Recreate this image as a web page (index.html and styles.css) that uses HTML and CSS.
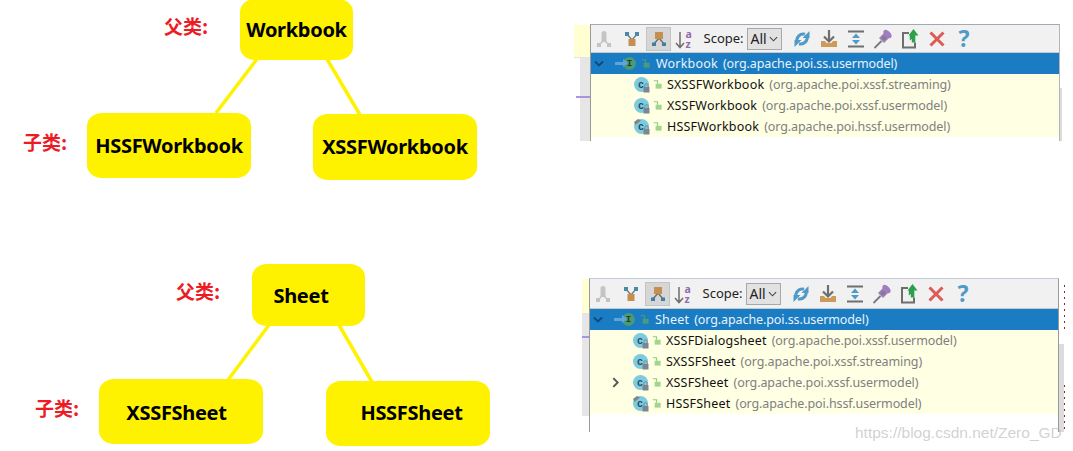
FILE: index.html
```html
<!DOCTYPE html>
<html lang="zh">
<head>
<meta charset="utf-8">
<title>Workbook and Sheet hierarchy</title>
<link rel="stylesheet" href="styles.css">
</head>
<body>
<svg class="defs" width="0" height="0" aria-hidden="true">
  <defs>
    <symbol id="i-sub" viewBox="0 0 20 20"><path d="M10 6v5M10 11l-5 5M10 11l5 5" stroke="#c4c4c4" stroke-width="1.5" fill="none"/><circle cx="10" cy="4.500" r="2.500" fill="#c4c4c4"/><rect x="7.500" y="6" width="5" height="7" fill="#c4c4c4"/><rect x="3" y="14" width="4" height="4" fill="#c4c4c4"/><rect x="13" y="14" width="4" height="4" fill="#c4c4c4"/></symbol>
    <symbol id="i-super" viewBox="0 0 20 20"><path d="M5 5l5 6M15 5l-5 6" stroke="#7d7d7d" stroke-width="1.400" fill="none"/><rect x="3" y="3" width="4" height="4" fill="#4a8aa8"/><rect x="13" y="3" width="4" height="4" fill="#4a8aa8"/><rect x="6.500" y="10" width="7" height="7" fill="#c58f50"/></symbol>
    <symbol id="i-type" viewBox="0 0 20 20"><path d="M10 9l-5 6M10 9l5 6" stroke="#6d6d6d" stroke-width="1.400" fill="none"/><rect x="6" y="3" width="8" height="7" fill="#c58f50"/><rect x="3" y="13.500" width="4" height="3.500" fill="#3f80a0"/><rect x="13" y="13.500" width="4" height="3.500" fill="#3f80a0"/></symbol>
    <symbol id="i-sort" viewBox="0 0 20 20"><path d="M6 3v15M2 14l4 4.500 4-4.500" stroke="#6e6e6e" stroke-width="1.500" fill="none"/><text x="11.500" y="9" class="sort-a">a</text><text x="11.500" y="19" class="sort-z">z</text></symbol>
    <symbol id="i-refresh" viewBox="0 0 20 20"><path d="M13 5.200A6.500 6.500 0 0 0 5 13" stroke="#4f9ac7" stroke-width="3" fill="none"/><path d="M7 14.800A6.500 6.500 0 0 0 15 7" stroke="#4f9ac7" stroke-width="3" fill="none"/><path d="M17.500 2v7h-7zM2.500 18v-7h7z" fill="#4f9ac7"/></symbol>
    <symbol id="i-export" viewBox="0 0 20 20"><path d="M2 12h4l1.500 2h5l1.500-2h4v6H2z" fill="#cf9a55"/><path d="M10 1v10" stroke="#6e6e6e" stroke-width="2.200"/><path d="M5 7.500L10 12.500 15 7.500" stroke="#6e6e6e" stroke-width="2.200" fill="none"/></symbol>
    <symbol id="i-expand" viewBox="0 0 20 20"><path d="M2 2.500h16M2 17.500h16" stroke="#6e6e6e" stroke-width="2"/><path d="M10 4.500l-4 4.500h8zM10 15.500l-4-4.500h8z" fill="#4f9ac7"/></symbol>
    <symbol id="i-pin" viewBox="0 0 20 20"><path d="M1.500 19l7-7" stroke="#7a7a7a" stroke-width="1.800"/><path d="M6 9l5-5 5 5-5 5z" fill="#a37cc0"/><ellipse cx="14.500" cy="5" rx="5" ry="3" transform="rotate(45 14.500 5)" fill="#a37cc0"/><circle cx="11" cy="9" r="2.300" fill="#7f7f8f"/></symbol>
    <symbol id="i-open" viewBox="0 0 20 20"><path d="M9 4H3v14.500h12v-5" stroke="#6e6e6e" stroke-width="2" fill="none"/><path d="M13.500 0l5 6.500h-3.200v7h-3.500V10l-2 1.500V6.500H8.500z" fill="#2ba14b"/></symbol>
    <symbol id="i-x" viewBox="0 0 20 20"><path d="M3.500 3.500l13 13M16.500 3.500l-13 13" stroke="#dd5b55" stroke-width="3"/></symbol>
    <symbol id="i-help" viewBox="0 0 20 20"><text x="10" y="18" class="help-q">?</text></symbol>
    <symbol id="i-unlock" viewBox="0 0 12 12"><path d="M1 1h5v4" stroke="#94ca85" stroke-width="1.600" fill="none"/><rect x="3.500" y="5" width="8" height="6.500" fill="#a4d48e"/></symbol>
    <symbol id="i-unlock-dark" viewBox="0 0 12 12"><path d="M1 1h5v4" stroke="#4a9a7c" stroke-width="1.600" fill="none"/><rect x="3.500" y="5" width="8" height="6.500" fill="#4a9a7c"/></symbol>
    <symbol id="i-class" viewBox="0 0 16 16"><circle cx="7.500" cy="7.500" r="7.500" fill="#7ccbe0"/><text x="7" y="11" class="class-c">c</text><rect x="9.500" y="10" width="6" height="5.500" fill="#7b8690"/><path d="M10.800 10V8.500a1.700 1.700 0 0 1 3.400 0V10" stroke="#7b8690" fill="none"/></symbol>
    <symbol id="i-class-abs" viewBox="0 0 16 16"><circle cx="7.500" cy="7.500" r="7.500" fill="#7ccbe0"/><path d="M0 3L4 0l3 1.500L1.500 6z" fill="#7b8690"/><text x="7" y="11" class="class-c">c</text><rect x="9.500" y="10" width="6" height="5.500" fill="#7b8690"/><path d="M10.800 10V8.500a1.700 1.700 0 0 1 3.400 0V10" stroke="#7b8690" fill="none"/></symbol>
  </defs>
</svg>

<main class="canvas">
  <svg class="links" viewBox="0 0 1073 451" aria-hidden="true">
    <path d="M257 59L216 113M327 59L360 115M269 325L228 380M339 325L372 382"/>
  </svg>

  <div class="tag tag-parent-a">父类:</div>
  <div class="tag tag-child-a">子类:</div>
  <div class="tag tag-parent-b">父类:</div>
  <div class="tag tag-child-b">子类:</div>

  <div class="node node-workbook">Workbook</div>
  <div class="node node-hssf-wb">HSSFWorkbook</div>
  <div class="node node-xssf-wb">XSSFWorkbook</div>
  <div class="node node-sheet"><span class="shift-sheet">Sheet</span></div>
  <div class="node node-xssf-sh"><span class="shift-xssf">XSSFSheet</span></div>
  <div class="node node-hssf-sh"><span class="shift-hssf">HSSFSheet</span></div>

  <div class="edge edge-a"><div class="edge-yellow"></div><div class="edge-grey"><i class="edge-mark"></i></div></div>
  <section class="panel panel-a">
    <div class="toolbar">
      <svg class="tool tool-first"><use href="#i-sub"/></svg>
      <svg class="tool"><use href="#i-super"/></svg>
      <span class="tool-on"><svg class="tool"><use href="#i-type"/></svg></span>
      <svg class="tool tool-sort"><use href="#i-sort"/></svg>
      <span class="scope">Scope:</span>
      <span class="select">All<svg class="caret" viewBox="0 0 10 6"><path d="M1 1l4 4 4-4"/></svg></span>
      <svg class="tool tool-refresh"><use href="#i-refresh"/></svg>
      <svg class="tool"><use href="#i-export"/></svg>
      <svg class="tool"><use href="#i-expand"/></svg>
      <svg class="tool"><use href="#i-pin"/></svg>
      <svg class="tool"><use href="#i-open"/></svg>
      <svg class="tool"><use href="#i-x"/></svg>
      <svg class="tool"><use href="#i-help"/></svg>
    </div>
    <div class="row row-head">
      <svg class="tw" viewBox="0 0 10 6"><path d="M1 1l4 4 4-4"/></svg>
      <span class="iface"><i class="arrow"></i><b>I</b></span>
      <svg class="lock"><use href="#i-unlock-dark"/></svg>
      <span class="name">Workbook</span><span class="pkg">(org.apache.poi.ss.usermodel)</span>
    </div>
    <div class="row"><svg class="cls"><use href="#i-class"/></svg><svg class="lock"><use href="#i-unlock"/></svg><span class="name">SXSSFWorkbook</span><span class="pkg">(org.apache.poi.xssf.streaming)</span></div>
    <div class="row"><svg class="cls"><use href="#i-class"/></svg><svg class="lock"><use href="#i-unlock"/></svg><span class="name">XSSFWorkbook</span><span class="pkg">(org.apache.poi.xssf.usermodel)</span></div>
    <div class="row"><svg class="cls"><use href="#i-class-abs"/></svg><svg class="lock"><use href="#i-unlock"/></svg><span class="name">HSSFWorkbook</span><span class="pkg">(org.apache.poi.hssf.usermodel)</span></div>
  </section>
  <div class="scrollbit scrollbit-a"></div>

  <div class="edge edge-b"><div class="edge-yellow"></div><div class="edge-grey"><i class="edge-mark"></i></div></div>
  <section class="panel panel-b">
    <div class="toolbar">
      <svg class="tool tool-first"><use href="#i-sub"/></svg>
      <svg class="tool"><use href="#i-super"/></svg>
      <span class="tool-on"><svg class="tool"><use href="#i-type"/></svg></span>
      <svg class="tool tool-sort"><use href="#i-sort"/></svg>
      <span class="scope">Scope:</span>
      <span class="select">All<svg class="caret" viewBox="0 0 10 6"><path d="M1 1l4 4 4-4"/></svg></span>
      <svg class="tool tool-refresh"><use href="#i-refresh"/></svg>
      <svg class="tool"><use href="#i-export"/></svg>
      <svg class="tool"><use href="#i-expand"/></svg>
      <svg class="tool"><use href="#i-pin"/></svg>
      <svg class="tool"><use href="#i-open"/></svg>
      <svg class="tool"><use href="#i-x"/></svg>
      <svg class="tool"><use href="#i-help"/></svg>
    </div>
    <div class="row row-head">
      <svg class="tw" viewBox="0 0 10 6"><path d="M1 1l4 4 4-4"/></svg>
      <span class="iface"><i class="arrow"></i><b>I</b></span>
      <svg class="lock"><use href="#i-unlock-dark"/></svg>
      <span class="name">Sheet</span><span class="pkg">(org.apache.poi.ss.usermodel)</span>
    </div>
    <div class="row"><svg class="cls"><use href="#i-class"/></svg><svg class="lock"><use href="#i-unlock"/></svg><span class="name">XSSFDialogsheet</span><span class="pkg">(org.apache.poi.xssf.usermodel)</span></div>
    <div class="row"><svg class="cls"><use href="#i-class"/></svg><svg class="lock"><use href="#i-unlock"/></svg><span class="name">SXSSFSheet</span><span class="pkg">(org.apache.poi.xssf.streaming)</span></div>
    <div class="row"><svg class="chev" viewBox="0 0 6 10"><path d="M1 1l4 4-4 4"/></svg><svg class="cls"><use href="#i-class"/></svg><svg class="lock"><use href="#i-unlock"/></svg><span class="name">XSSFSheet</span><span class="pkg">(org.apache.poi.xssf.usermodel)</span></div>
    <div class="row"><svg class="cls"><use href="#i-class-abs"/></svg><svg class="lock"><use href="#i-unlock"/></svg><span class="name">HSSFSheet</span><span class="pkg">(org.apache.poi.hssf.usermodel)</span></div>
  </section>
  <div class="scrollbit scrollbit-b"></div>
  <div class="noise noise-top"></div>
  <div class="noise noise-bottom"></div>

  <div class="watermark">https://blog.csdn.net/Zero_GD</div>
</main>
</body>
</html>
```
FILE: styles.css
```css
* { box-sizing: border-box; }
html, body { margin: 0; padding: 0; background: #fff; overflow: hidden; }
.defs { display: block; height: 0; }
.canvas { position: relative; width: 1073px; height: 451px; overflow: hidden; font-family: "Noto Sans", sans-serif; }
.links { position: absolute; inset: 0; width: 1073px; height: 451px; }
.links path { stroke: #fff200; stroke-width: 3.500; fill: none; }

.node { position: absolute; display: flex; align-items: center; justify-content: center; background: #fff200; color: #000; font-weight: 700; font-size: 20px; letter-spacing: -.3px; border-radius: 15px / 13px; }
.node-workbook { left: 240px; top: -1px; width: 113px; height: 61px; }
.node-hssf-wb { left: 87px; top: 113px; width: 164px; height: 65px; }
.node-xssf-wb { left: 313px; top: 114px; width: 164px; height: 66px; padding-bottom: 2px; }
.node-sheet { left: 252px; top: 264px; width: 113px; height: 62px; }
.node-xssf-sh { left: 99px; top: 379px; width: 164px; height: 65px; padding-top: 2px; }
.node-hssf-sh { left: 326px; top: 381px; width: 164px; height: 65px; padding-bottom: 2px; }
.shift-sheet { margin-right: 15px; }
.shift-xssf { margin-right: 9px; }
.shift-hssf { margin-left: 7px; }

.tag { position: absolute; color: #ed1c24; font-family: "Noto Sans CJK SC", sans-serif; font-weight: 700; font-size: 19px; line-height: 20px; white-space: nowrap; }
.tag-parent-a { left: 164px; top: 16px; }
.tag-child-a { left: 23px; top: 132px; }
.tag-parent-b { left: 176px; top: 281px; }
.tag-child-b { left: 35px; top: 398px; }

.panel { position: absolute; display: flex; flex-direction: column; background: #fff; border-left: 1px solid #9a9a9a; font-size: 12.500px; line-height: 21px; }
.panel-a { left: 590px; top: 24px; width: 470px; height: 117px; border-top: 1px solid #a5a8b4; border-right: 1px solid #b5b5b5; }
.panel-b { left: 589px; top: 278px; width: 470px; height: 154px; border-top: 1px solid #c5cbdc; border-right: 1px solid #9a9a9a; }
.toolbar { display: flex; align-items: center; height: 28px; background: #f1f1f1; border-bottom: 1px solid #c9c9c9; }
.panel-b .toolbar { height: 30px; }
.tool { width: 20px; height: 20px; flex: none; margin: 0 3.500px; }
.tool-first { margin: 0 4.500px 0 2.500px; }
.tool-on { display: flex; align-items: center; justify-content: center; width: 25px; height: 24px; margin: 0 3px 0 1px; background: #d6d6d6; border: 1px solid #c4c4c4; flex: none; }
.tool-sort { margin-left: 0; }
.tool-refresh { margin-left: 10px; }
.scope { width: 39px; margin-left: 6px; color: #222; font-size: 13px; }
.select { display: flex; align-items: center; justify-content: space-between; width: 35px; height: 22px; margin-left: 4px; padding: 0 3px; background: #e2e2e2; border: 1px solid #a8a8a8; color: #222; font-size: 14px; flex: none; }
.caret { width: 9px; height: 6px; }
.caret path { fill: none; stroke: #444; stroke-width: 1.200; }

.row { display: flex; align-items: center; height: 21px; padding-left: 43px; background: #ffffe4; color: #111; white-space: pre; }
.row-head { padding-left: 3px; background: #1a7cc3; color: #e9f3fa; }
.name { letter-spacing: .2px; }
.pkg { color: #808080; margin-left: 5px; letter-spacing: -.1px; }
.row-head .pkg { color: #e9f3fa; }
.tw { width: 10px; height: 7px; flex: none; }
.tw path { fill: none; stroke: #0d4a78; stroke-width: 1.800; }
.iface { position: relative; display: flex; align-items: center; justify-content: center; width: 13px; height: 13px; margin-left: 19px; border-radius: 50%; background: #4c9a71; color: #1d3a3a; font: 700 9px "Liberation Mono", monospace; flex: none; }
.iface b { position: relative; }
.arrow { position: absolute; left: -8px; top: 5px; width: 9px; height: 3px; background: #5fa6d8; }
.arrow::after { content: ""; position: absolute; left: 8px; top: -3px; border-left: 5px solid #5fa6d8; border-top: 4.500px solid transparent; border-bottom: 4.500px solid transparent; }
.lock { width: 9px; height: 9px; margin: 0 5px 0 3px; flex: none; }
.row-head .lock { margin: 0 6px 0 5px; }
.cls { width: 16px; height: 16px; flex: none; }
.row .chev { width: 7px; height: 11px; margin-left: -21px; margin-right: 14px; flex: none; }
.chev path { fill: none; stroke: #555; stroke-width: 1.800; }

.edge { position: absolute; display: flex; flex-direction: column; }
.edge-a { left: 574px; top: 25px; width: 16px; height: 116px; }
.edge-b { left: 582px; top: 279px; width: 7px; height: 137px; }
.edge-yellow { height: 33px; background: #ffffd2; border-bottom: 1px solid #e3e3e3; }
.edge-grey { flex: 1; background: #e6e6e6; margin-left: 6px; }
.edge-mark { display: block; height: 2px; margin: 38px 0 0 -4px; background: #a894e0; }
.edge-b .edge-yellow { height: 35px; }
.edge-b .edge-grey { margin-left: 0; }
.edge-b .edge-mark { margin: 22px 0 0; }

.scrollbit { position: absolute; background: #dcdcdc; }
.scrollbit-a { left: 1060px; top: 88px; width: 2px; height: 53px; }
.scrollbit-b { left: 1059px; top: 344px; width: 5px; height: 88px; }
.noise { position: absolute; left: 1064px; width: 1px; background: repeating-linear-gradient(180deg, #8a2a20 0 2px, transparent 2px 6px); }
.noise-top { top: 285px; height: 48px; }
.noise-bottom { top: 385px; height: 47px; }

.watermark { position: absolute; left: 855px; top: 421px; font-family: "Liberation Sans", sans-serif; font-size: 15.500px; line-height: 24px; color: rgba(170, 170, 170, .55); white-space: nowrap; }

.sort-a, .sort-z { font: 700 10.500px "Noto Sans", sans-serif; fill: #8f6cb0; }
.help-q { font: 700 23px "Noto Sans", sans-serif; fill: #4f9ac7; text-anchor: middle; }
.class-c { font: 700 10px "Liberation Mono", monospace; fill: #2c4a55; text-anchor: middle; }
```
